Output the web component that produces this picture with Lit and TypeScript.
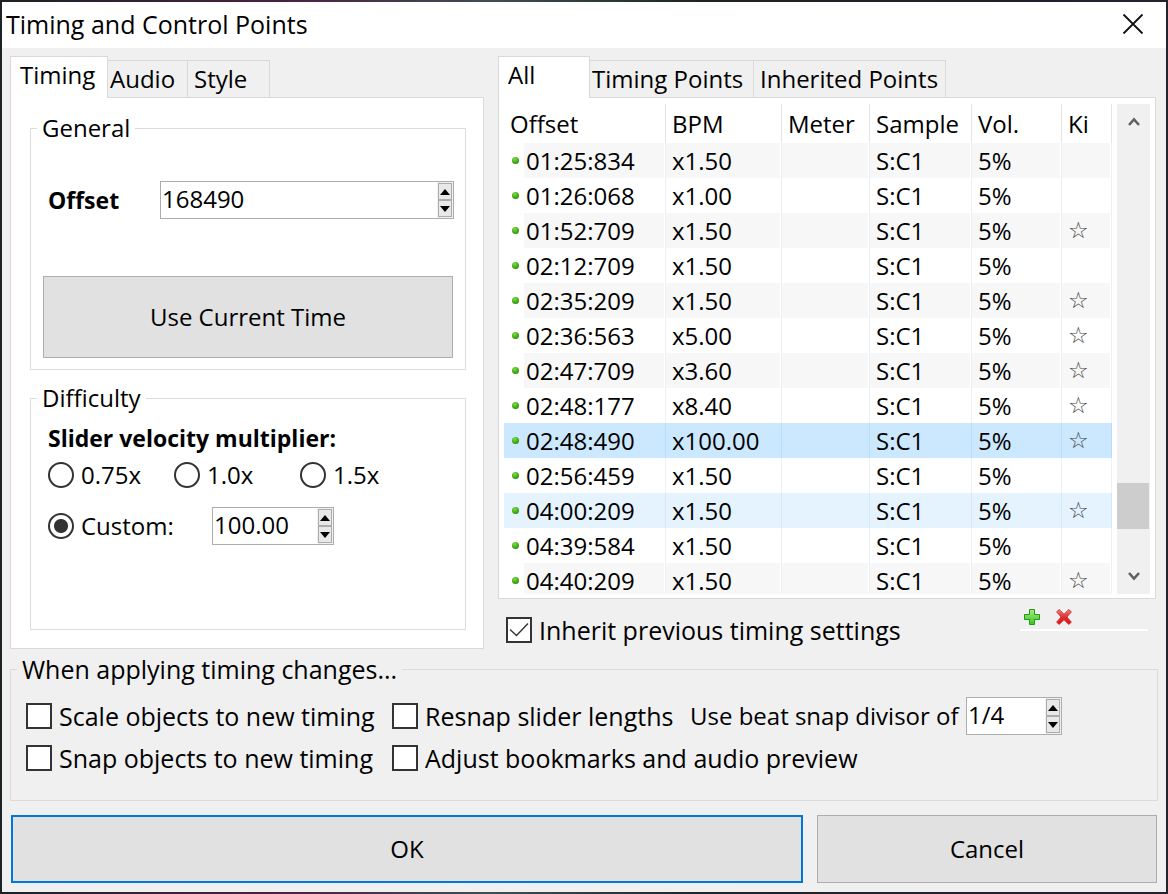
import { LitElement, html, css, svg, nothing } from "lit";
import { customElement, property, state } from "lit/decorators.js";
import { classMap } from "lit/directives/class-map.js";

interface TimingPoint {
  offset: string;
  bpm: string;
  meter: string;
  sample: string;
  volume: string;
  kiai: boolean;
}

const point = (offset: string, bpm: string, kiai: boolean): TimingPoint => ({
  offset,
  bpm,
  meter: "",
  sample: "S:C1",
  volume: "5%",
  kiai,
});

const POINTS: TimingPoint[] = [
  point("01:25:834", "x1.50", false),
  point("01:26:068", "x1.00", false),
  point("01:52:709", "x1.50", true),
  point("02:12:709", "x1.50", false),
  point("02:35:209", "x1.50", true),
  point("02:36:563", "x5.00", true),
  point("02:47:709", "x3.60", true),
  point("02:48:177", "x8.40", true),
  point("02:48:490", "x100.00", true),
  point("02:56:459", "x1.50", false),
  point("04:00:209", "x1.50", true),
  point("04:39:584", "x1.50", false),
  point("04:40:209", "x1.50", true),
];

@customElement("spin-box")
export class SpinBox extends LitElement {
  @property() value = "";
  @property() label = "";

  static styles = css`
    :host {
      display: flex;
      box-sizing: border-box;
      min-width: 0;
      height: 38px;
      border: 1px solid #abadb3;
      background: #fff;
    }
    .field {
      flex: 1;
      min-width: 0;
      box-sizing: border-box;
      border: 0;
      outline: 0;
      padding: 0 1px 2px;
      font: inherit;
      color: #000;
      background: #fff;
    }
    .buttons {
      display: flex;
      flex-direction: column;
      width: 14px;
      padding: 1px;
      background: #f0f0f0;
    }
    .step {
      display: flex;
      flex: 1;
      align-items: center;
      justify-content: center;
      min-height: 0;
      padding: 0;
      border: 1px solid #acacac;
      background: #e8e8e8;
    }
  `;

  render() {
    return html`
      <input class="field" type="text" aria-label=${this.label} .value=${this.value} />
      <div class="buttons">
        <button class="step" type="button" aria-label="Increase">
          <svg width="10" height="6" viewBox="0 0 10 6"><path d="M0 6 5 0l5 6z" /></svg>
        </button>
        <button class="step" type="button" aria-label="Decrease">
          <svg width="10" height="6" viewBox="0 0 10 6"><path d="M0 0 5 6l5-6z" /></svg>
        </button>
      </div>
    `;
  }
}

@customElement("app-root")
export class AppRoot extends LitElement {
  @state() private leftTab = "Timing";
  @state() private rightTab = "All";
  @state() private selected = 8;

  static styles = css`
    :host {
      display: block;
      box-sizing: border-box;
      height: 100vh;
      min-height: 780px;
      padding: 2px;
      background: linear-gradient(90deg, #1d2224, #4a2244 25%, #3f4f50 42%, #1f2426 60%, #23232c);
      font: 24px/34px "Open Sans", "Segoe UI", sans-serif;
      color: #000;
    }
    .window {
      display: flex;
      flex-direction: column;
      height: 100%;
      background: #f0f0f0;
    }
    .titlebar {
      display: flex;
      align-items: center;
      justify-content: space-between;
      box-sizing: border-box;
      height: 46px;
      padding: 0 18px 2px 4px;
      background: #fff;
    }
    .title {
      margin: 0;
      font-size: 25px;
      font-weight: 400;
    }
    button {
      font: inherit;
      color: inherit;
    }
    .close {
      display: flex;
      padding: 4px;
      border: 0;
      background: none;
    }
    .main {
      display: grid;
      flex: 1;
      grid-template-columns: 474fr 658fr;
      gap: 14px;
      min-height: 0;
      padding: 8px 10px 0 8px;
    }
    .column {
      display: flex;
      flex-direction: column;
      min-width: 0;
      min-height: 0;
    }
    .tabs {
      display: flex;
      align-items: flex-end;
      height: 42px;
      margin-bottom: -1px;
      z-index: 1;
    }
    .tab {
      box-sizing: border-box;
      height: 38px;
      padding: 0 3px 0 6px;
      border: 1px solid #d9d9d9;
      border-left: 0;
      background: #f0f0f0;
      text-align: left;
      white-space: nowrap;
    }
    .tab.active + .tab {
      padding-left: 2px;
    }
    .tab.active {
      height: 42px;
      padding: 0 9px 5px;
      border-left: 1px solid #d9d9d9;
      border-bottom: 0;
      background: #fff;
    }
    .w-timing { width: 98px; }
    .w-audio { width: 80px; }
    .w-style { width: 82px; }
    .w-all { width: 92px; }
    .w-points { width: 164px; }
    .w-inherited { width: 192px; }
    .pane {
      display: flex;
      flex: 1;
      min-height: 0;
      border: 1px solid #d9d9d9;
      background: #fff;
    }
    .pane.settings {
      flex-direction: column;
      gap: 11px;
      padding: 13px 17px 18px 19px;
    }
    .group {
      min-width: 0;
      margin: 0;
      padding: 0;
      border: 1px solid #dcdcdc;
    }
    .group legend {
      margin-left: 6px;
      padding: 0 5px;
    }
    .general-body {
      display: flex;
      flex-direction: column;
      gap: 57px;
      padding: 36px 12px 11px;
    }
    .offset-row {
      display: grid;
      grid-template-columns: 112px minmax(0, 1fr);
      align-items: center;
      padding-left: 5px;
    }
    .offset-row spin-box {
      margin-right: -1px;
    }
    .bold {
      font-size: 23px;
      font-weight: 700;
    }
    .push {
      border: 1px solid #adadad;
      background: #e1e1e1;
    }
    .push.current {
      height: 82px;
    }
    .difficulty {
      flex: 1;
    }
    .difficulty-body {
      display: flex;
      flex-direction: column;
      padding: 6px 17px;
    }
    .radios {
      display: grid;
      grid-template-columns: repeat(3, 126px);
      padding: 3px 0 15px;
    }
    .custom-row {
      display: grid;
      grid-template-columns: 164px 122px;
      align-items: center;
    }
    .choice {
      display: flex;
      align-items: center;
      gap: 7px;
      white-space: nowrap;
    }
    .choice input {
      flex: none;
      box-sizing: border-box;
      width: 26px;
      height: 26px;
      margin: 0;
      appearance: none;
      border: 2px solid #333;
      background: #fff;
    }
    .choice input[type="radio"] {
      border-radius: 50%;
    }
    .choice input[type="radio"]:checked {
      background: radial-gradient(circle, #333 0 6.5px, #fff 7.5px);
    }
    .choice.box,
    .apply legend {
      font-size: 25px;
    }
    .tick {
      display: grid;
    }
    .tick > * {
      grid-area: 1 / 1;
    }
    .tick svg {
      pointer-events: none;
    }
    .pane.list {
      gap: 5px;
      padding: 6px 5px 4px;
    }
    .scroll {
      flex: 1;
      min-width: 0;
      overflow: hidden;
    }
    table {
      width: 100%;
      table-layout: fixed;
      border-collapse: separate;
      border-spacing: 0;
    }
    .c-offset { width: 162px; }
    .c-bpm { width: 116px; }
    .c-meter { width: 88px; }
    .c-sample { width: 102px; }
    .c-vol { width: 90px; }
    .c-ki { width: 50px; }
    th {
      height: 39px;
      box-sizing: border-box;
      padding: 0 0 0 6px;
      border-right: 1px solid #e5e5e5;
      font-weight: 400;
      text-align: left;
      white-space: nowrap;
    }
    td {
      height: 35px;
      box-sizing: border-box;
      padding: 0 0 0 6px;
      border-right: 1px solid #eaf1f8;
      white-space: nowrap;
    }
    tr.odd td {
      background: #f7f7f7;
      box-shadow: inset -1px 0 #fff;
    }
    tr.odd td:first-child {
      background: linear-gradient(90deg, #fff 20px, #f7f7f7 20px);
    }
    tr.selected td,
    tr.selected td:first-child {
      border-color: #b9defc;
      background: #cce8ff;
      box-shadow: none;
    }
    tr.hot td,
    tr.hot td:first-child {
      border-color: #d3e9fa;
      background: #e5f3ff;
      box-shadow: none;
    }
    .stamp {
      display: flex;
      align-items: center;
      gap: 7px;
      padding-left: 2px;
    }
    .dot {
      width: 7px;
      height: 7px;
      border-radius: 50%;
      background: radial-gradient(circle at 40% 30%, #7fdc4a, #43ae12 50%, #2c6e12);
    }
    .star {
      display: block;
      font: 23px/35px "DejaVu Sans", sans-serif;
      color: #444;
    }
    .scrollbar {
      display: flex;
      flex-direction: column;
      width: 33px;
      background: #f0f0f0;
    }
    .arrow {
      display: flex;
      align-items: center;
      justify-content: center;
      height: 36px;
      padding: 0;
      border: 0;
      background: none;
    }
    .track {
      display: flex;
      flex: 1;
      flex-direction: column;
      justify-content: flex-end;
      padding: 0 1px 29px 0;
    }
    .thumb {
      height: 46px;
      background: #cdcdcd;
    }
    .under {
      display: flex;
      align-items: flex-start;
      justify-content: space-between;
      height: 50px;
      padding: 0 8px;
    }
    .under .choice {
      padding-top: 14px;
    }
    .tools {
      display: flex;
      gap: 16px;
      box-sizing: border-box;
      width: 128px;
      padding: 10px 4px 4px;
      border-bottom: 2px solid #fff;
    }
    .tool {
      display: flex;
      padding: 0;
      border: 0;
      background: none;
    }
    .apply {
      margin: 3px 8px 0;
    }
    .apply-body {
      display: grid;
      grid-template-columns: 366px 298px 1fr;
      grid-auto-rows: 38px;
      row-gap: 4px;
      align-items: center;
      padding: 11px 15px 23px;
    }
    .wide {
      grid-column: 2 / -1;
    }
    .divisor {
      display: grid;
      grid-template-columns: 276px 96px;
      align-items: center;
      white-space: nowrap;
    }
    .footer {
      display: grid;
      grid-template-columns: 792fr 340fr;
      gap: 14px;
      padding: 14px 9px 9px;
    }
    .footer .push {
      height: 68px;
    }
    .push.primary {
      border: 2px solid #0078d7;
    }
  `;

  private tab(name: string, width: string, active: string, pick: (n: string) => void) {
    return html`<button
      type="button"
      role="tab"
      aria-selected=${name === active ? "true" : "false"}
      class=${classMap({ tab: true, [width]: true, active: name === active })}
      @click=${() => pick(name)}
    >${name}</button>`;
  }

  private radio(text: string, checked = false) {
    return html`<label class="choice"
      ><input type="radio" name="velocity" .checked=${checked} />${text}</label
    >`;
  }

  private check(text: string, checked = false, extra = "") {
    const mark = svg`<path d="M4 12.500l6.500 6L22 6.500" fill="none" stroke="#333" stroke-width="1.400" />`;
    return html`<label class="choice box ${extra}"
      ><span class="tick"
        ><input type="checkbox" .checked=${checked} />${checked
          ? html`<svg width="26" height="26" viewBox="0 0 26 26">${mark}</svg>`
          : nothing}</span
      >${text}</label
    >`;
  }

  private row(p: TimingPoint, i: number) {
    return html`<tr
      class=${classMap({ odd: i % 2 === 0, selected: i === this.selected, hot: i === 10 })}
      @click=${() => (this.selected = i)}
    >
      <td><div class="stamp"><span class="dot"></span>${p.offset}</div></td>
      <td>${p.bpm}</td>
      <td>${p.meter}</td>
      <td>${p.sample}</td>
      <td>${p.volume}</td>
      <td>${p.kiai ? html`<span class="star">☆</span>` : nothing}</td>
    </tr>`;
  }

  render() {
    const left = (n: string) => (this.leftTab = n);
    const right = (n: string) => (this.rightTab = n);
    return html`
      <div class="window" role="dialog" aria-label="Timing and Control Points">
        <header class="titlebar">
          <h1 class="title">Timing and Control Points</h1>
          <button class="close" type="button" aria-label="Close">
            <svg width="22" height="22" viewBox="0 0 22 22">
              <path d="M1.500 1.500l19 19M20.500 1.500l-19 19" stroke="#111" stroke-width="1.800" />
            </svg>
          </button>
        </header>

        <main class="main">
          <section class="column">
            <div class="tabs" role="tablist">
              ${this.tab("Timing", "w-timing", this.leftTab, left)}
              ${this.tab("Audio", "w-audio", this.leftTab, left)}
              ${this.tab("Style", "w-style", this.leftTab, left)}
            </div>
            <div class="pane settings">
              <fieldset class="group">
                <legend>General</legend>
                <div class="general-body">
                  <div class="offset-row">
                    <span class="bold">Offset</span>
                    <spin-box label="Offset" value="168490"></spin-box>
                  </div>
                  <button class="push current" type="button">Use Current Time</button>
                </div>
              </fieldset>
              <fieldset class="group difficulty">
                <legend>Difficulty</legend>
                <div class="difficulty-body">
                  <span class="bold">Slider velocity multiplier:</span>
                  <div class="radios">
                    ${this.radio("0.75x")} ${this.radio("1.0x")} ${this.radio("1.5x")}
                  </div>
                  <div class="custom-row">
                    ${this.radio("Custom:", true)}
                    <spin-box label="Custom velocity" value="100.00"></spin-box>
                  </div>
                </div>
              </fieldset>
            </div>
          </section>

          <section class="column">
            <div class="tabs" role="tablist">
              ${this.tab("All", "w-all", this.rightTab, right)}
              ${this.tab("Timing Points", "w-points", this.rightTab, right)}
              ${this.tab("Inherited Points", "w-inherited", this.rightTab, right)}
            </div>
            <div class="pane list">
              <div class="scroll">
                <table>
                  <thead>
                    <tr>
                      <th class="c-offset">Offset</th>
                      <th class="c-bpm">BPM</th>
                      <th class="c-meter">Meter</th>
                      <th class="c-sample">Sample</th>
                      <th class="c-vol">Vol.</th>
                      <th class="c-ki">Ki</th>
                    </tr>
                  </thead>
                  <tbody>
                    ${POINTS.map((p, i) => this.row(p, i))}
                  </tbody>
                </table>
              </div>
              <div class="scrollbar">
                <button class="arrow" type="button" aria-label="Scroll up">
                  <svg width="12" height="10" viewBox="0 0 12 10">
                    <path d="M1 8l5-5.500 5 5.500" fill="none" stroke="#606060" stroke-width="2.600" />
                  </svg>
                </button>
                <div class="track"><div class="thumb"></div></div>
                <button class="arrow" type="button" aria-label="Scroll down">
                  <svg width="12" height="10" viewBox="0 0 12 10">
                    <path d="M1 2l5 5.500 5-5.500" fill="none" stroke="#606060" stroke-width="2.600" />
                  </svg>
                </button>
              </div>
            </div>
            <div class="under">
              ${this.check("Inherit previous timing settings", true)}
              <div class="tools">
                <button class="tool" type="button" aria-label="Add">
                  <svg width="16" height="16" viewBox="0 0 16 16">
                    <defs>
                      <linearGradient id="plus" x1="0" y1="0" x2="0" y2="1">
                        <stop offset="0" stop-color="#a5ea86" />
                        <stop offset="1" stop-color="#3fc51f" />
                      </linearGradient>
                    </defs>
                    <path
                      d="M5.500 .5h5v5h5v5h-5v5h-5v-5h-5v-5h5z"
                      fill="url(#plus)"
                      stroke="#1c9a10"
                      stroke-linejoin="round"
                    />
                  </svg>
                </button>
                <button class="tool" type="button" aria-label="Delete">
                  <svg width="16" height="16" viewBox="0 0 16 16">
                    <defs>
                      <linearGradient id="cross" x1="0" y1="0" x2="0" y2="1">
                        <stop offset="0" stop-color="#f08080" />
                        <stop offset=".5" stop-color="#e23030" />
                        <stop offset="1" stop-color="#e80c0c" />
                      </linearGradient>
                    </defs>
                    <path
                      d="M3.200 .6 8 5.200 12.800 .6l2.600 2.200L11 8l4.400 5.200-2.600 2.200L8 10.800l-4.800 4.600-2.600-2.200L5 8 .6 2.800z"
                      fill="url(#cross)"
                      stroke="#c43a3a"
                      stroke-width=".9"
                      stroke-linejoin="round"
                    />
                  </svg>
                </button>
              </div>
            </div>
          </section>
        </main>

        <fieldset class="group apply">
          <legend>When applying timing changes...</legend>
          <div class="apply-body">
            ${this.check("Scale objects to new timing")}
            ${this.check("Resnap slider lengths")}
            <div class="divisor">
              <span>Use beat snap divisor of</span>
              <spin-box label="Use beat snap divisor of" value="1/4"></spin-box>
            </div>
            ${this.check("Snap objects to new timing")}
            ${this.check("Adjust bookmarks and audio preview", false, "wide")}
          </div>
        </fieldset>

        <footer class="footer">
          <button class="push primary" type="button">OK</button>
          <button class="push" type="button">Cancel</button>
        </footer>
      </div>
    `;
  }
}
